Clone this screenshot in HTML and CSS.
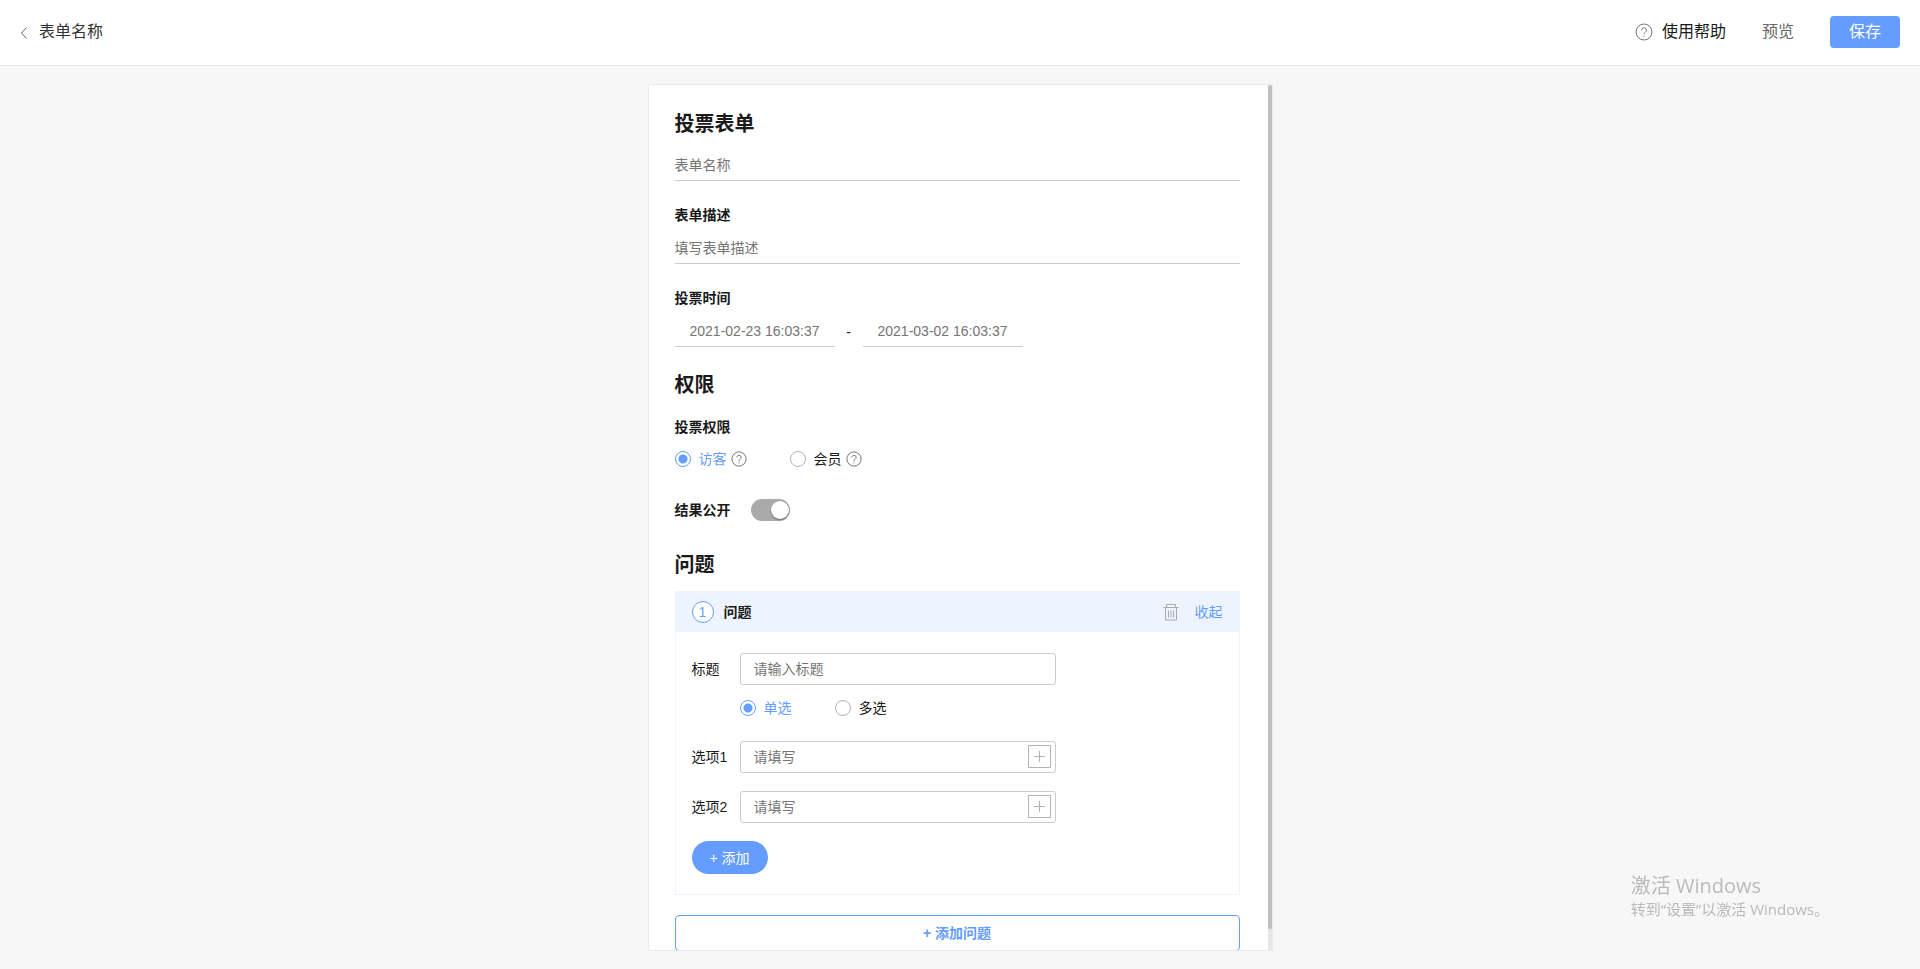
FILE: index.html
```html
<!DOCTYPE html>
<html lang="zh-CN">
<head>
<meta charset="utf-8">
<meta name="viewport" content="width=device-width, initial-scale=1">
<title>投票表单</title>
<link rel="stylesheet" href="styles.css">
</head>
<body>
<svg class="sprite" aria-hidden="true">
  <symbol id="help" viewBox="0 0 18 18">
    <circle cx="9" cy="9" r="8" />
    <path d="M6.600 7.200a2.400 2.400 0 1 1 3.700 2c-.9.6-1.300 1-1.300 2.100M9 12.700v1.200" />
  </symbol>
  <symbol id="plus-box" viewBox="0 0 23 23">
    <path d="M.5.5h22v22H.5zM6 11.500h11M11.500 6v11" />
  </symbol>
</svg>

<header class="topbar">
  <button class="back" type="button">
    <svg class="back-icon" viewBox="0 0 8 14" aria-hidden="true"><path d="M6.500 2.500L1.500 8l5 5.500" /></svg>
    <span>表单名称</span>
  </button>
  <nav class="actions">
    <a class="help-link" href="#"><svg class="help-icon help-icon-large" aria-hidden="true"><use href="#help" /></svg>使用帮助</a>
    <a class="preview" href="#">预览</a>
    <button class="save" type="button">保存</button>
  </nav>
</header>

<main class="workspace">
  <div class="card">
    <form class="form">
      <h1 class="heading">投票表单</h1>
      <input class="line-input" type="text" aria-label="表单名称" placeholder="表单名称">

      <label class="label" for="desc">表单描述</label>
      <input class="line-input" id="desc" type="text" placeholder="填写表单描述">

      <label class="label" for="start">投票时间</label>
      <div class="dates">
        <input class="line-input date" id="start" type="text" placeholder="2021-02-23 16:03:37">
        <span class="dash">-</span>
        <input class="line-input date" type="text" aria-label="结束时间" placeholder="2021-03-02 16:03:37">
      </div>

      <h2 class="heading">权限</h2>
      <span class="label" id="access">投票权限</span>
      <div class="radios access" role="radiogroup" aria-labelledby="access">
        <div class="choice">
          <label class="radio"><input type="radio" name="access" checked><span>访客</span></label>
          <svg class="help-icon" aria-hidden="true"><use href="#help" /></svg>
        </div>
        <div class="choice">
          <label class="radio"><input type="radio" name="access"><span>会员</span></label>
          <svg class="help-icon" aria-hidden="true"><use href="#help" /></svg>
        </div>
      </div>

      <div class="public">
        <label class="strong" for="public">结果公开</label>
        <input class="switch" id="public" type="checkbox" role="switch" checked>
      </div>

      <h2 class="heading">问题</h2>
      <section class="question">
        <div class="question-head">
          <span class="number">1</span>
          <h3 class="strong">问题</h3>
          <button class="plain trash" type="button" aria-label="删除">
            <svg viewBox="0 0 16 17" aria-hidden="true"><path d="M.5 3.500h15M3.500 3V.5h9V3M2.500 4v12h11V4M5.500 6.500v7M8 6.500v7M10.500 6.500v7" /></svg>
          </button>
          <button class="plain" type="button">收起</button>
        </div>
        <div class="question-body">
          <div class="row">
            <label for="title">标题</label>
            <div class="field"><input class="box-input" id="title" type="text" placeholder="请输入标题"></div>
          </div>
          <div class="radios kinds" role="radiogroup" aria-label="选择方式">
            <label class="radio"><input type="radio" name="kind" checked><span>单选</span></label>
            <label class="radio"><input type="radio" name="kind"><span>多选</span></label>
          </div>
          <div class="row option">
            <label for="option1">选项1</label>
            <div class="field">
              <input class="box-input" id="option1" type="text" placeholder="请填写">
              <button class="plus" type="button" aria-label="添加图片"><svg aria-hidden="true"><use href="#plus-box" /></svg></button>
            </div>
          </div>
          <div class="row option">
            <label for="option2">选项2</label>
            <div class="field">
              <input class="box-input" id="option2" type="text" placeholder="请填写">
              <button class="plus" type="button" aria-label="添加图片"><svg aria-hidden="true"><use href="#plus-box" /></svg></button>
            </div>
          </div>
          <button class="add-option" type="button">+ 添加</button>
        </div>
      </section>
      <button class="add-question" type="button">+ 添加问题</button>
    </form>
    <div class="scroll-track" aria-hidden="true"><div class="scroll-thumb"></div></div>
  </div>
</main>

<aside class="watermark">
  <p class="watermark-title">激活 Windows</p>
  <p class="watermark-text">转到“设置”以激活 Windows。</p>
</aside>
</body>
</html>
```

FILE: styles.css
```css
* {
  box-sizing: border-box;
}

body {
  display: flex;
  flex-direction: column;
  height: 100vh;
  margin: 0;
  background: #f7f7f7;
  color: #1a1a1a;
  font: 14px/20px "Liberation Sans", "Noto Sans CJK SC", sans-serif;
}

button,
input {
  margin: 0;
  font: inherit;
  color: inherit;
}

button {
  padding: 0;
  border: 0;
  background: none;
  cursor: pointer;
}

a {
  color: inherit;
  text-decoration: none;
}

h1,
h2,
h3,
p {
  margin: 0;
}

svg {
  fill: none;
  stroke: currentColor;
}

.sprite {
  display: none;
}

.topbar {
  display: flex;
  align-items: center;
  justify-content: space-between;
  flex: none;
  height: 66px;
  padding: 0 20px 1px;
  border-bottom: 1px solid #e8e8e8;
  background: #fff;
  font-size: 16px;
}

.back {
  display: flex;
  align-items: center;
  gap: 11px;
  color: #333;
}

.back-icon {
  width: 8px;
  height: 14px;
  color: #666;
}

.actions {
  display: flex;
  align-items: center;
  gap: 36px;
}

.help-link {
  display: flex;
  align-items: center;
  gap: 9px;
}

.preview {
  color: #666;
}

.save {
  width: 70px;
  height: 32px;
  border-radius: 4px;
  background: #649dff;
  color: #fff;
}

.help-icon {
  width: 16px;
  height: 16px;
  color: #666;
}

.help-icon-large {
  width: 18px;
  height: 18px;
  color: #777;
}

.workspace {
  display: flex;
  flex: 1;
  justify-content: center;
  min-height: 0;
  padding: 18px 0;
}

.card {
  display: flex;
  position: relative;
  width: 625px;
  border: 1px solid #ebebeb;
  background: #fff;
}

.form {
  display: flex;
  flex: 1;
  flex-direction: column;
  padding: 25px 32px 20px 26px;
  overflow-y: auto;
  scrollbar-width: none;
}

.form > * {
  flex-shrink: 0;
}

.scroll-track {
  position: absolute;
  top: 0;
  right: 0;
  bottom: 0;
  width: 4px;
  background: #e6e6e6;
}

.scroll-thumb {
  height: 97.6%;
  border-radius: 2px;
  background: #bfbfbf;
}

.heading {
  font-size: 20px;
  line-height: 28px;
}

.label,
.strong {
  font-size: 14px;
  line-height: 20px;
  font-weight: bold;
}

.line-input {
  width: 100%;
  height: 30px;
  padding: 0 0 2px;
  border: 0;
  border-bottom: 1px solid #ccc;
  background: none;
}

::placeholder {
  color: #757575;
  opacity: 1;
}

.heading + .line-input {
  margin-top: 13px;
}

.line-input + .label {
  margin: 24px 0 9px;
}

.dates {
  display: flex;
  align-items: center;
}

.date {
  width: 160px;
  padding: 0 14px 2px 15px;
}

.dash {
  width: 28px;
  text-align: center;
}

.dates + .heading {
  margin: 24px 0 18px;
}

.radios {
  display: flex;
}

.access {
  gap: 43px;
  margin: 12px 0 30px;
}

.choice {
  display: flex;
  align-items: center;
  gap: 4px;
}

.radio {
  display: flex;
  align-items: center;
  gap: 8px;
}

.radio input {
  width: 16px;
  height: 16px;
  appearance: none;
  border: 1px solid #b3b3b3;
  border-radius: 50%;
}

.radio input:checked {
  border-color: #649dff;
  background: radial-gradient(circle, #649dff 4px, transparent 5px);
}

.radio input:checked + span {
  color: #649dff;
}

.public {
  display: flex;
  align-items: center;
  gap: 20px;
  margin-bottom: 30px;
}

.switch {
  width: 39px;
  height: 22px;
  padding: 2px 1px 2px 2px;
  appearance: none;
  border-radius: 11px;
  background: #aaa;
}

.switch::before {
  content: "";
  display: block;
  width: 18px;
  height: 18px;
  margin-left: auto;
  border-radius: 50%;
  background: #fff;
  box-shadow: 0 1px 2px rgba(0, 0, 0, 0.4);
}

.question {
  margin: 12px 0 20px;
  border: 1px solid #edf4ff;
}

.question-head {
  display: flex;
  align-items: center;
  height: 40px;
  padding: 0 16px;
  background: #edf4ff;
}

.number {
  width: 22px;
  height: 22px;
  margin-right: 10px;
  border: 1px solid #649dff;
  border-radius: 50%;
  background: #fff;
  color: #649dff;
  text-align: center;
}

.plain {
  color: #649dff;
}

.trash {
  width: 16px;
  height: 17px;
  margin: 0 16px 0 auto;
  color: #aaa;
}

.trash svg,
.plus svg {
  display: block;
  width: 100%;
  height: 100%;
}

.question-body {
  padding: 21px 16px 20px;
}

.row {
  display: flex;
  align-items: center;
}

.row > label {
  width: 48px;
}

.field {
  position: relative;
  width: 316px;
}

.box-input {
  display: block;
  width: 100%;
  height: 32px;
  padding: 0 13px;
  border: 1px solid #ccc;
  border-radius: 3px;
  background: none;
}

.kinds {
  gap: 43px;
  margin: 13px 0 23px 48px;
}

.option {
  margin-bottom: 18px;
}

.plus {
  position: absolute;
  top: 4px;
  right: 5px;
  width: 23px;
  height: 23px;
  color: #b3b3b3;
}

.add-option {
  display: block;
  width: 76px;
  height: 33px;
  border-radius: 17px;
  background: #649dff;
  color: #fff;
}

.add-question {
  height: 36px;
  border: 1px solid #649dff;
  border-radius: 4px;
  color: #649dff;
  font-weight: bold;
}

.watermark {
  position: fixed;
  right: 91px;
  bottom: 50px;
  color: #bababa;
  font-family: "Open Sans", "Noto Sans CJK SC", sans-serif;
  pointer-events: none;
}

.watermark-title {
  font-size: 20px;
  line-height: 26px;
}

.watermark-text {
  font-size: 15px;
  line-height: 20px;
}
```
